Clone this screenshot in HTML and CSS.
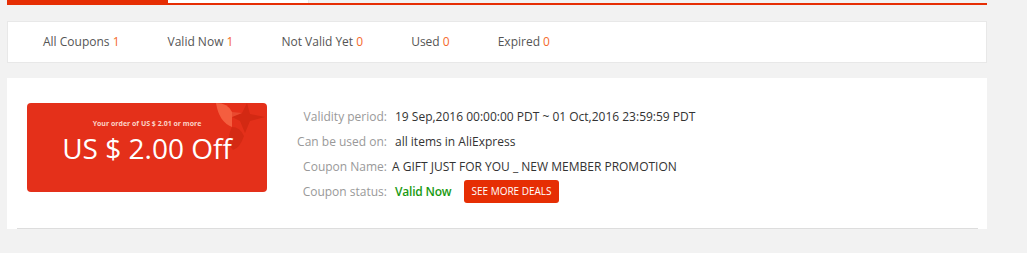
FILE: index.html
```html
<!DOCTYPE html>
<html lang="en">
<head>
    <meta charset="UTF-8">
    <meta name="viewport" content="width=device-width, initial-scale=1.0">
    <link rel="stylesheet" href="styles.css">
    <title>My Coupons</title>
</head>
<body>

    <div class="pagina">

        <div class="abas">
            <div class="aba ativa"></div>
            <div class="aba"></div>
        </div>

        <ul class="filtros">
            <li>All Coupons <span class="num">1</span></li>
            <li>Valid Now <span class="num">1</span></li>
            <li>Not Valid Yet <span class="num">0</span></li>
            <li>Used <span class="num">0</span></li>
            <li>Expired <span class="num">0</span></li>
        </ul>

        <div class="lista">
            <div class="cupom">
                <div class="vale">
                    <svg class="enfeite" width="52" height="52" viewBox="0 0 52 52">
                        <path d="M1 0 Q13 0 17 9 L17 24 Q4 19 1 0 Z" fill="#f45e3f"/>
                        <path d="M32 0 L35 11 L50 14 L35 18 L30 30 L25 18 L17 14 L27 10 Z" fill="#d32913"/>
                        <path d="M17 24 Q25 24 29 33 Q25 45 18 47 Q10 38 17 24 Z" fill="#d42a14"/>
                        <path d="M17 9 L27 10 L17 14 Z" fill="#e94a30"/>
                    </svg>
                    <p class="minimo">Your order of US $ 2.01 or more</p>
                    <p class="valor">US $ 2.00 Off</p>
                </div>

                <div class="info">
                    <span class="rotulo">Validity period:</span>
                    <span class="dado recuo">19 Sep,2016 00:00:00 PDT ~ 01 Oct,2016 23:59:59 PDT</span>

                    <span class="rotulo">Can be used on:</span>
                    <span class="dado recuo">all items in AliExpress</span>

                    <span class="rotulo">Coupon Name:</span>
                    <span class="dado">A GIFT JUST FOR YOU _ NEW MEMBER PROMOTION</span>

                    <span class="rotulo">Coupon status:</span>
                    <span class="dado recuo">
                        <span class="valido">Valid Now</span>
                        <a class="botao" href="#">SEE MORE DEALS</a>
                    </span>
                </div>
            </div>
        </div>

    </div>

</body>
</html>
```

FILE: styles.css
```css
body {
    margin: 0;
    background-color: #f2f2f2;
    font-family: "Open Sans", "Liberation Sans", Arial, sans-serif;
    font-size: 12px;
    color: #333;
}
p, ul {
    margin: 0;
    padding: 0;
}

.pagina {
    width: 980px;
    margin-left: 7px;
}

/* abas (cortadas no topo) */
.abas {
    display: flex;
    height: 3px;
    border-bottom: 2px solid #e62e04;
}
.aba {
    width: 140px;
    background-color: #fff;
    border-right: 1px solid #e8e8e8;
}
.aba.ativa {
    width: 161px;
    height: 5px;
    border-right: none;
    background-color: #e62e04;
}

/* filtros */
.filtros {
    list-style: none;
    display: flex;
    margin-top: 16px;
    padding: 0 11px 1px;
    height: 39px;
    align-items: center;
    background-color: #fff;
    border: 1px solid #e8e8e8;
}
.filtros li {
    padding: 0 24px;
    color: #555;
    cursor: pointer;
}
.num {
    color: #f5692b;
}

/* lista de cupons */
.lista {
    margin-top: 15px;
    padding: 25px 9px 0 10px;
    background-color: #fff;
}
.cupom {
    display: flex;
    gap: 20px;
    padding: 0 10px 24px;
    border-bottom: 1px solid #ddd;
}

.vale {
    position: relative;
    overflow: hidden;
    width: 240px;
    height: 89px;
    padding-top: 15px;
    box-sizing: border-box;
    border-radius: 4px;
    background-color: #e4301a;
    text-align: center;
    color: #fff;
}
.enfeite {
    position: absolute;
    top: 0;
    right: 0;
}
.minimo {
    position: relative;
    font-size: 7px;
    font-weight: 700;
    line-height: 12px;
    color: #fbd3c6;
}
.valor {
    position: relative;
    margin-top: 3px;
    font-size: 28px;
    line-height: 30px;
}

.info {
    display: grid;
    grid-template-columns: 100px auto;
    grid-auto-rows: 25px;
    column-gap: 5px;
    align-items: center;
    margin-top: 1px;
}
.rotulo {
    text-align: right;
    color: #999;
}
.dado {
    display: flex;
    align-items: center;
}
.recuo {
    padding-left: 3px;
}
.valido {
    color: #1a9a12;
    font-weight: 600;
    letter-spacing: -0.2px;
}
.botao {
    margin-left: 13px;
    padding: 0 7px;
    height: 23px;
    line-height: 23px;
    border-radius: 3px;
    background-color: #e62e04;
    color: #fff;
    font-size: 10px;
    text-decoration: none;
}
```
